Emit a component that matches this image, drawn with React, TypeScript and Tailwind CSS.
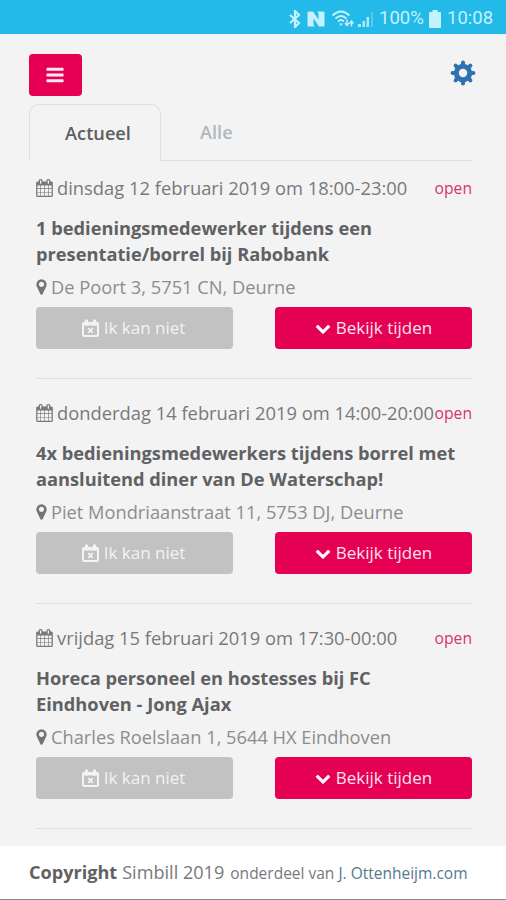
import type { ReactNode } from "react";

const shifts = [
  {
    date: "dinsdag 12 februari 2019 om 18:00-23:00",
    title: ["1 bedieningsmedewerker tijdens een", "presentatie/borrel bij Rabobank"],
    address: "De Poort 3, 5751 CN, Deurne",
  },
  {
    date: "donderdag 14 februari 2019 om 14:00-20:00",
    title: ["4x bedieningsmedewerkers tijdens borrel met", "aansluitend diner van De Waterschap!"],
    address: "Piet Mondriaanstraat 11, 5753 DJ, Deurne",
  },
  {
    date: "vrijdag 15 februari 2019 om 17:30-00:00",
    title: ["Horeca personeel en hostesses bij FC", "Eindhoven - Jong Ajax"],
    address: "Charles Roelslaan 1, 5644 HX Eindhoven",
  },
];

const Icon = ({ d, className, viewBox = "0 0 1792 1792" }: { d: string; className: string; viewBox?: string }) => (
  <svg viewBox={viewBox} fill="currentColor" className={`shrink-0 ${className}`}>
    <path d={d} />
  </svg>
);

const BARS =
  "M1664 1344v128q0 26-19 45t-45 19h-1408q-26 0-45-19t-19-45v-128q0-26 19-45t45-19h1408q26 0 45 19t19 45zm0-512v128q0 26-19 45t-45 19h-1408q-26 0-45-19t-19-45v-128q0-26 19-45t45-19h1408q26 0 45 19t19 45zm0-512v128q0 26-19 45t-45 19h-1408q-26 0-45-19t-19-45v-128q0-26 19-45t45-19h1408q26 0 45 19t19 45z";
const CALENDAR =
  "M192 1664h288v-288h-288v288zm352 0h320v-288h-320v288zm-352-352h288v-320h-288v320zm352 0h320v-320h-320v320zm-352-384h288v-288h-288v288zm736 736h320v-288h-320v288zm-384-736h320v-288h-320v288zm768 736h288v-288h-288v288zm-384-352h320v-320h-320v320zm-352-864v-288q0-13-9.5-22.5t-22.5-9.5h-64q-13 0-22.5 9.5t-9.5 22.5v288q0 13 9.5 22.5t22.5 9.5h64q13 0 22.5-9.5t9.5-22.5zm736 864h288v-320h-288v320zm-384-384h320v-288h-320v288zm384 0h288v-288h-288v288zm32-480v-288q0-13-9.5-22.5t-22.5-9.5h-64q-13 0-22.5 9.5t-9.5 22.5v288q0 13 9.5 22.5t22.5 9.5h64q13 0 22.5-9.5t9.5-22.5zm384-64v1280q0 52-38 90t-90 38h-1408q-52 0-90-38t-38-90v-1280q0-52 38-90t90-38h128v-96q0-66 47-113t113-47h64q66 0 113 47t47 113v96h384v-96q0-66 47-113t113-47h64q66 0 113 47t47 113v96h128q52 0 90 38t38 90z";
const MARKER =
  "M1152 640q0-106-75-181t-181-75-181 75-75 181 75 181 181 75 181-75 75-181zm256 0q0 109-33 179l-364 774q-16 33-47.5 52t-67.5 19-67.5-19-46.5-52l-365-774q-33-70-33-179 0-212 150-362t362-150 362 150 150 362z";
const CHEVRON =
  "M1683 808l-742 741q-19 19-45 19t-45-19l-742-741q-19-19-19-45.5t19-45.5l166-165q19-19 45-19t45 19l531 531 531-531q19-19 45-19t45 19l166 165q19 19 19 45.5t-19 45.5z";

const Gear = () => (
  <svg viewBox="0 0 26 26" className="mt-[6px] mr-[2px] h-[26px] w-[26px] text-[#2f72b0]" fill="none" stroke="currentColor">
    <circle cx="13" cy="13" r="6.700" strokeWidth="5" />
    <path
      d="M13 4V2.600M13 22v1.400M4 13H2.600M22 13h1.400M6.600 6.600l-1-1M19.400 19.400l1 1M6.600 19.400l-1 1M19.400 6.600l1-1"
      strokeWidth="4"
      strokeLinecap="round"
    />
  </svg>
);

const CalendarTimes = () => (
  <svg viewBox="0 0 17 18" className="mr-[5px] h-[18px] w-[17px] shrink-0" fill="none" stroke="currentColor">
    <rect x="1" y="4" width="15" height="13" rx="1" strokeWidth="2" />
    <path d="M1 5h15" strokeWidth="3" />
    <path d="M4.500 2v3M12.500 2v3" strokeWidth="3.400" strokeLinecap="round" />
    <path d="M6.200 9.200l4.600 4.600M10.800 9.200l-4.600 4.600" strokeWidth="1.700" />
  </svg>
);

const StatusBar = () => (
  <div className="flex h-[34px] shrink-0 items-center justify-end bg-[#23b9e8] pt-[3px] pr-[11px] text-[#c3f2fc]">
    <svg viewBox="0 0 12 18" className="h-[18px] w-[12px]" fill="none" stroke="currentColor" strokeWidth="2.2">
      <path d="M1 5l9 8-4 4V1l4 4-9 8" />
    </svg>
    <svg viewBox="0 0 18 18" className="ml-[6px] h-[18px] w-[18px]" fill="currentColor">
      <path d="M.5 2.500Q.5 1.500 1.500 1.500H6l5.500 8V4q0-1.500-1.500-2.500h6q1.500 0 1.500 1v13q0 1-1 1H12L6.500 8.500V14q0 1.500 1.500 2.500H1.500q-1 0-1-1z" />
    </svg>
    <svg viewBox="0 0 22 18" className="ml-[7px] h-[18px] w-[22px]" fill="none" stroke="currentColor" strokeWidth="1.9">
      <path d="M.5 5.500Q9-2.500 17.500 5.500M3.500 8.500Q9 3.500 14.500 8.500M6 11.500Q9 8.500 12 11.500" />
      <path d="M7 13.500h4l-2 2.500z" fill="currentColor" stroke="none" />
      <path d="M15 9.500v6M13 13l2 2.500 2-2.500M19.500 16.500v-5M17.500 13.500l2-2.500 2 2.500" strokeWidth="1.500" />
    </svg>
    <svg viewBox="0 0 18 18" className="ml-[3px] h-[18px] w-[18px]" fill="currentColor">
      <path d="M1 14h3v3H1zM5.500 11h2.500v6H5.500zM9.500 7H12v10H9.500z" opacity=".85" />
      <path d="M14 2h2v15h-2z" opacity=".3" />
    </svg>
    <span className="ml-[4px] w-[46px] font-[Roboto] text-[18.500px] leading-none whitespace-nowrap">100%</span>
    <svg viewBox="0 0 12 18" className="ml-[4px] h-[18px] w-[12px]" fill="currentColor">
      <path d="M3.500 0h5v2H11a1 1 0 011 1v14a1 1 0 01-1 1H1a1 1 0 01-1-1V3a1 1 0 011-1h2.500z" />
    </svg>
    <span className="ml-[6px] w-[48px] font-[Roboto] text-[18.500px] leading-none whitespace-nowrap">10:08</span>
  </div>
);

const Button = ({ className, children }: { className: string; children: ReactNode }) => (
  <button
    className={`flex h-[42px] w-[197px] items-center justify-center rounded-[4px] text-[17px] whitespace-nowrap ${className}`}
  >
    {children}
  </button>
);

export default function App() {
  return (
    <div className="flex h-[900px] w-[506px] flex-col overflow-hidden bg-[#f3f3f3] font-['Open_Sans',sans-serif] text-[#77797b]">
      <StatusBar />

      <header className="flex items-start justify-between pt-[20px] pr-[28px] pl-[29px]">
        <button className="flex h-[42px] w-[53px] items-center justify-center rounded-[4px] bg-[#e60053] pr-[1px] text-[#fdeaf1]">
          <Icon d={BARS} className="h-[20px] w-[20px]" />
        </button>
        <Gear />
      </header>

      <nav className="mt-[8px] mr-[34px] ml-[29px] flex h-[57px] text-[18.200px] font-semibold">
        <div className="flex w-[132px] items-center justify-center rounded-t-[10px] border border-b-0 border-[#dedfe0] pt-[2px] pl-[6px] text-[#5c5e60]">
          Actueel
        </div>
        <div className="flex flex-1 items-center border-b border-[#dedfe0] pt-[2px] pl-[39px] text-[#b2b7bd]">Alle</div>
      </nav>

      <main className="mr-[34px] ml-[36px] flex-1">
        {shifts.map((shift) => (
          <article key={shift.date} className="border-b border-[#dfdfe0] pt-[21px] pb-[29px] first:pt-[14px]">
            <div className="flex h-[26px] items-center justify-between whitespace-nowrap">
              <div className="flex items-center text-[18.350px]">
                <Icon d={CALENDAR} className="mr-[4px] h-[18px] w-[17px]" viewBox="64 0 1664 1792" />
                <span>{shift.date}</span>
              </div>
              <span className="pt-px text-[15.700px] text-[#d6336f]">open</span>
            </div>
            <h4 className="mt-[14px] text-[18.250px] leading-[26px] font-bold whitespace-nowrap text-[#5f6163]">
              {shift.title[0]}
              <br />
              {shift.title[1]}
            </h4>
            <div className="mt-[7px] flex h-[26px] items-center text-[18.250px] whitespace-nowrap text-[#8b8d8f]">
              <Icon d={MARKER} className="mr-[4px] h-[18px] w-[11px] text-[#727476]" viewBox="384 0 1024 1792" />
              <span>{shift.address}</span>
            </div>
            <div className="mt-[7px] flex justify-between">
              <Button className="bg-[#c2c2c2] pr-[2px] text-[#f3f3f3]">
                <CalendarTimes />
                Ik kan niet
              </Button>
              <Button className="bg-[#e60053] text-[#fbe3ec]">
                <Icon d={CHEVRON} className="mr-[5px] h-[16px] w-[16px] text-white" />
                Bekijk tijden
              </Button>
            </div>
          </article>
        ))}
      </main>

      <footer className="flex h-[54px] shrink-0 items-baseline border-b border-[#8c8c8c] bg-white pt-[13px] pl-[29px] text-[18.100px] whitespace-nowrap">
        <b className="text-[#5f6163]">Copyright</b>
        <span className="ml-[5px]">Simbill 2019</span>
        <span className="ml-[6px] text-[15.500px]">
          onderdeel van <a className="text-[#55788c]">J. Ottenheijm.com</a>
        </span>
      </footer>
    </div>
  );
}
